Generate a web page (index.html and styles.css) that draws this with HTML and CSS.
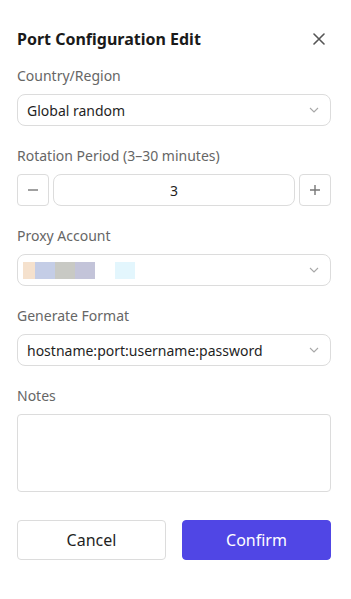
FILE: index.html
```html
<!DOCTYPE html>
<html>
  <head>
    <meta charset="UTF-8" />
    <title>Port Configuration Edit</title>
    <link rel="stylesheet" href="styles.css">
  </head>
  <body>
    <div class="dialog">
      <!-- Header -->
      <div class="dialog-header">
        <div class="dialog-title">Port Configuration Edit</div>
        <div class="close-button">
          <svg width="12" height="12" viewBox="0 0 12 12">
            <path d="M1 1L11 11M11 1L1 11" stroke="#555" stroke-width="1.6" stroke-linecap="round" />
          </svg>
        </div>
      </div>

      <!-- Country -->
      <div class="field">
        <div class="field-label">Country/Region</div>
        <div class="select">
          <span class="select-value">Global random</span>
          <svg class="chevron" width="10" height="6" viewBox="0 0 10 6">
            <path d="M1 1L5 5L9 1" fill="none" stroke="#a8a8a8" stroke-width="1.1" />
          </svg>
        </div>
      </div>

      <!-- Rotation period -->
      <div class="field">
        <div class="field-label">Rotation Period (3–30 minutes)</div>
        <div class="stepper">
          <div class="step-button">
            <svg width="12" height="12" viewBox="0 0 12 12">
              <path d="M1 6H11" stroke="#777" stroke-width="1.4" />
            </svg>
          </div>
          <div class="step-input">3</div>
          <div class="step-button">
            <svg width="12" height="12" viewBox="0 0 12 12">
              <path d="M1 6H11M6 1V11" stroke="#777" stroke-width="1.4" />
            </svg>
          </div>
        </div>
      </div>

      <!-- Proxy account -->
      <div class="field">
        <div class="field-label">Proxy Account</div>
        <div class="select">
          <span class="blur-value">
            <span class="blur-block peach"></span>
            <span class="blur-block blue"></span>
            <span class="blur-block grey"></span>
            <span class="blur-block lilac"></span>
            <span class="blur-gap"></span>
            <span class="blur-block cyan"></span>
          </span>
          <svg class="chevron" width="10" height="6" viewBox="0 0 10 6">
            <path d="M1 1L5 5L9 1" fill="none" stroke="#a8a8a8" stroke-width="1.1" />
          </svg>
        </div>
      </div>

      <!-- Format -->
      <div class="field">
        <div class="field-label">Generate Format</div>
        <div class="select">
          <span class="select-value">hostname:port:username:password</span>
          <svg class="chevron" width="10" height="6" viewBox="0 0 10 6">
            <path d="M1 1L5 5L9 1" fill="none" stroke="#a8a8a8" stroke-width="1.1" />
          </svg>
        </div>
      </div>

      <!-- Notes -->
      <div class="field">
        <div class="field-label">Notes</div>
        <div class="textarea"></div>
      </div>

      <div class="dialog-footer">
        <button class="btn btn-cancel">Cancel</button>
        <button class="btn btn-confirm">Confirm</button>
      </div>
    </div>
  </body>
</html>
```

FILE: styles.css
```css
body {
  margin: 0;
  padding: 0;
  background-color: #fff;
  font-family: 'Noto Sans', 'Open Sans', sans-serif;
  color: #1f1f1f;
}

.dialog {
  padding: 27px 20px 0 17px;
}

.dialog-header {
  display: flex;
  align-items: center;
  justify-content: space-between;
  height: 24px;
  margin-bottom: 15px;
}

.dialog-title {
  font-size: 16px;
  font-weight: 700;
  color: #1a1a1a;
}

.close-button {
  display: flex;
  align-items: center;
  justify-content: center;
  width: 12px;
  height: 12px;
  margin-right: 6px;
  cursor: pointer;
}

.field {
  margin-bottom: 20px;
}

.field-label {
  height: 20px;
  line-height: 20px;
  font-size: 14px;
  color: #666;
  margin-bottom: 8px;
}

.select {
  box-sizing: border-box;
  height: 32px;
  border: 1px solid #dcdcdc;
  border-radius: 8px;
  display: flex;
  align-items: center;
  justify-content: space-between;
  padding: 0 11px 0 9px;
}

.select-value {
  font-size: 14px;
  color: #1f1f1f;
}

.chevron {
  flex-shrink: 0;
}

/* Blurred account placeholder */
.blur-value {
  display: flex;
  height: 17px;
  margin-left: -4px;
}

.blur-block {
  width: 20px;
  height: 100%;
}

.blur-block.peach {
  width: 12px;
  background-color: #f5e1cd;
}

.blur-block.blue {
  background-color: #c4cde6;
}

.blur-block.grey {
  background-color: #c8c9c4;
}

.blur-block.lilac {
  background-color: #c3c4d9;
}

.blur-block.cyan {
  background-color: #e3f6fd;
}

.blur-gap {
  width: 20px;
}

.stepper {
  display: flex;
  gap: 4px;
  height: 32px;
}

.step-button {
  box-sizing: border-box;
  width: 32px;
  height: 32px;
  border: 1px solid #dcdcdc;
  border-radius: 4px;
  display: flex;
  align-items: center;
  justify-content: center;
  cursor: pointer;
}

.step-input {
  box-sizing: border-box;
  flex-grow: 1;
  height: 32px;
  border: 1px solid #dcdcdc;
  border-radius: 8px;
  display: flex;
  align-items: center;
  justify-content: center;
  font-size: 14px;
  color: #1f1f1f;
}

.textarea {
  box-sizing: border-box;
  height: 78px;
  border: 1px solid #dcdcdc;
  border-radius: 4px;
}

.dialog-footer {
  display: flex;
  gap: 16px;
  margin-top: 28px;
}

.btn {
  flex: 1;
  height: 40px;
  border-radius: 4px;
  font-family: inherit;
  font-size: 16px;
  cursor: pointer;
}

.btn-cancel {
  background-color: #fff;
  border: 1px solid #dcdcdc;
  color: #1f1f1f;
}

.btn-confirm {
  background-color: #5046e5;
  border: 1px solid #5046e5;
  color: #fff;
}
```
